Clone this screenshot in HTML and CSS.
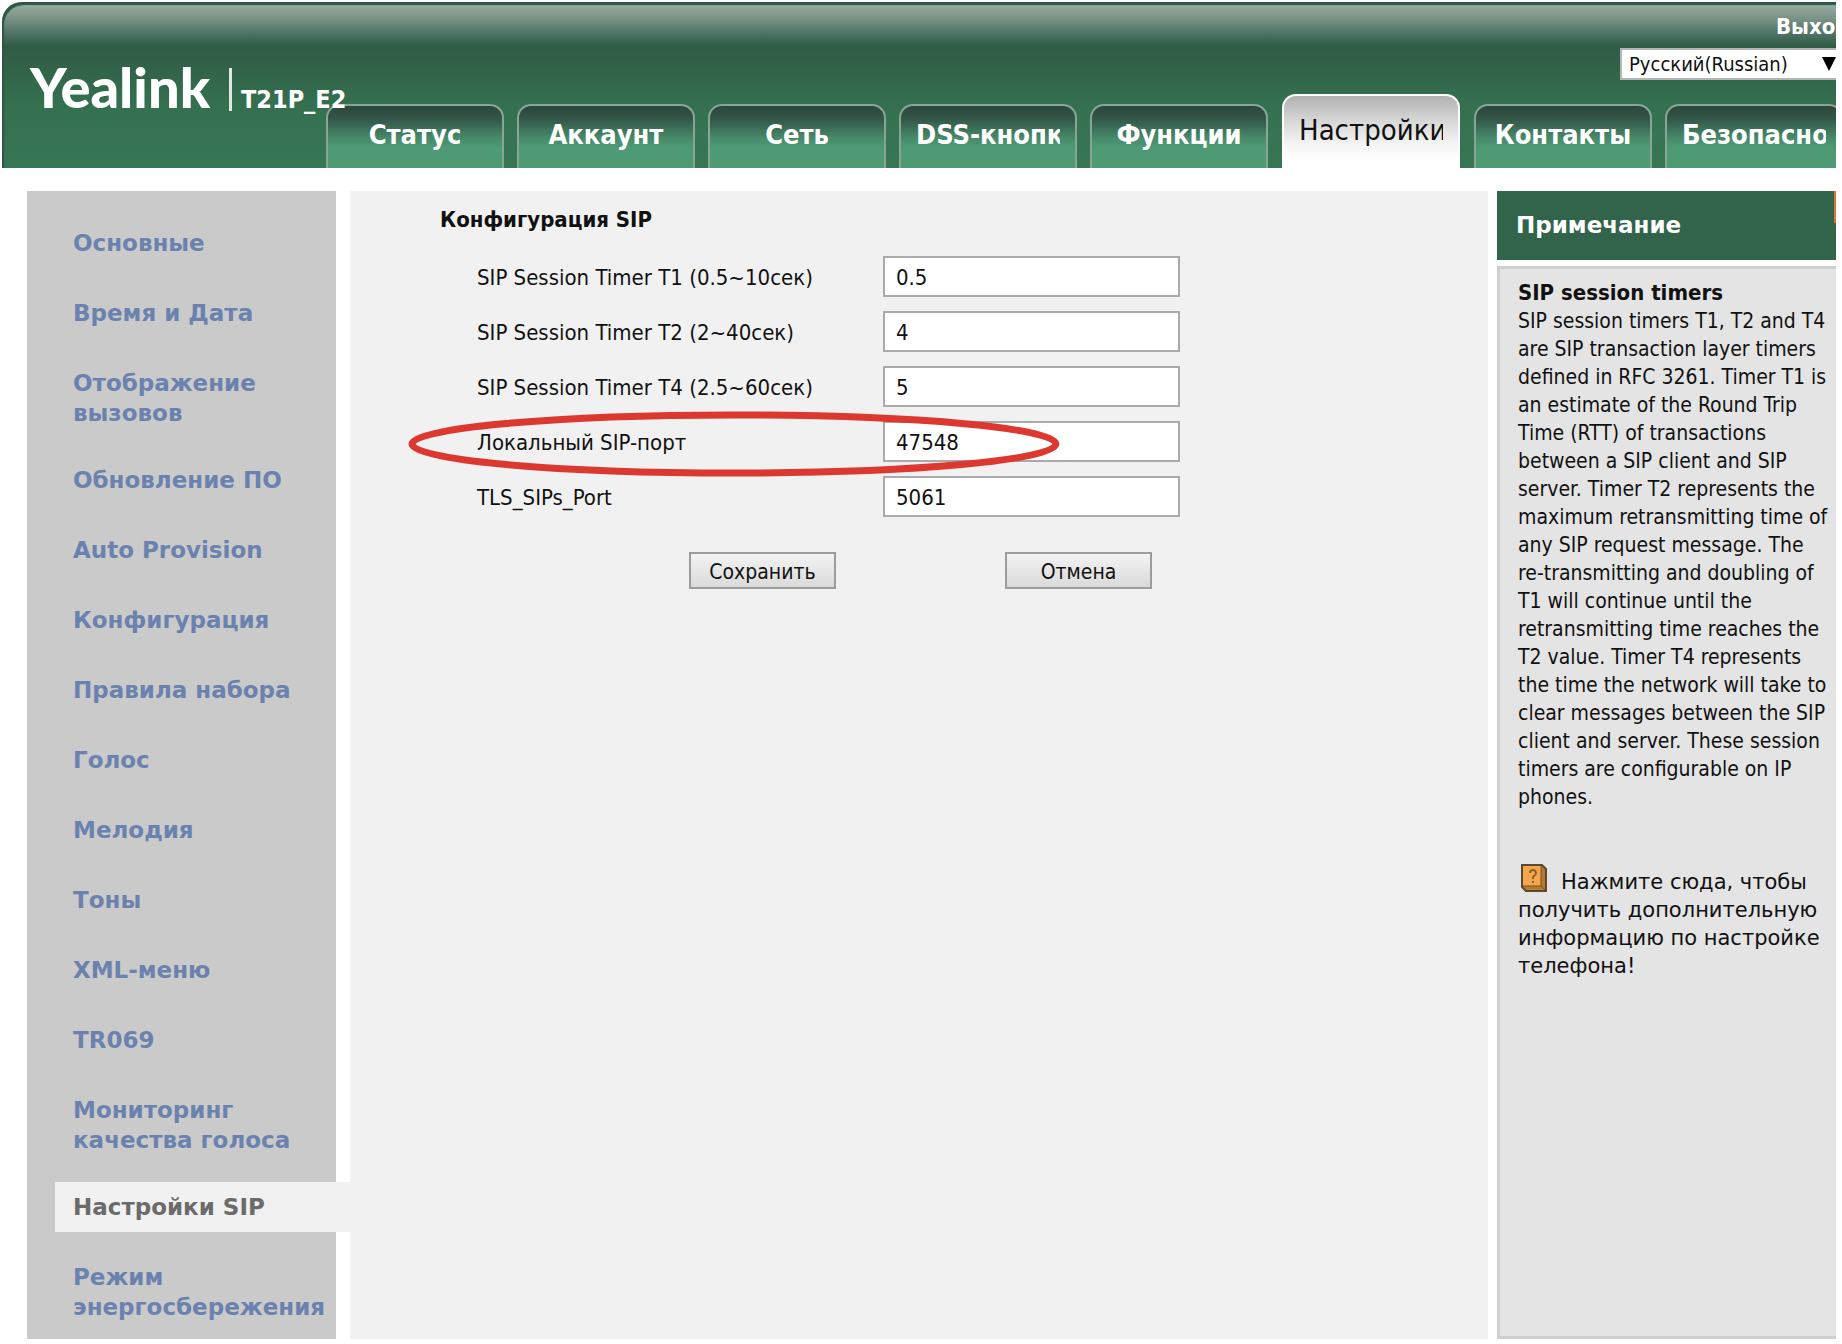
FILE: index.html
```html
<!DOCTYPE html>
<html lang="ru">
<head>
<meta charset="utf-8">
<meta name="viewport" content="width=device-width, initial-scale=1">
<title>Yealink T21P_E2</title>
<link rel="stylesheet" href="styles.css">
</head>
<body>
<div class="page">
  <header class="header">
    <div class="brand">
      <span class="logo">Yealink</span>
      <span class="model">T21P_E2</span>
    </div>
    <div class="tools">
      <a class="logout" href="#">Выход</a>
      <div class="lang">
        <select class="lang-select" aria-label="Язык"><option>Русский(Russian)</option></select>
        <svg class="lang-arrow" viewBox="0 0 14 14" aria-hidden="true"><path d="M0 0h14L7 14z"/></svg>
      </div>
    </div>
    <nav class="tabs">
      <a class="tab" href="#"><span class="tab-text">Статус</span></a>
      <a class="tab" href="#"><span class="tab-text">Аккаунт</span></a>
      <a class="tab" href="#"><span class="tab-text">Сеть</span></a>
      <a class="tab" href="#"><span class="tab-text">DSS-кнопки</span></a>
      <a class="tab" href="#"><span class="tab-text">Функции</span></a>
      <a class="tab tab-active" href="#"><span class="tab-text">Настройки</span></a>
      <a class="tab" href="#"><span class="tab-text">Контакты</span></a>
      <a class="tab" href="#"><span class="tab-text">Безопасность</span></a>
    </nav>
  </header>
  <div class="columns">
    <nav class="sidebar">
      <ul class="menu">
        <li><a class="menu-link" href="#">Основные</a></li>
        <li><a class="menu-link" href="#">Время и Дата</a></li>
        <li class="tall"><a class="menu-link" href="#">Отображение<br>вызовов</a></li>
        <li><a class="menu-link" href="#">Обновление ПО</a></li>
        <li><a class="menu-link" href="#">Auto Provision</a></li>
        <li><a class="menu-link" href="#">Конфигурация</a></li>
        <li><a class="menu-link" href="#">Правила набора</a></li>
        <li><a class="menu-link" href="#">Голос</a></li>
        <li><a class="menu-link" href="#">Мелодия</a></li>
        <li><a class="menu-link" href="#">Тоны</a></li>
        <li><a class="menu-link" href="#">XML-меню</a></li>
        <li><a class="menu-link" href="#">TR069</a></li>
        <li class="tall"><a class="menu-link" href="#">Мониторинг<br>качества голоса</a></li>
        <li><a class="menu-link menu-active" href="#">Настройки SIP</a></li>
        <li class="tall"><a class="menu-link" href="#">Режим<br>энергосбережения</a></li>
      </ul>
    </nav>
    <main class="content">
      <h2 class="section-title">Конфигурация SIP</h2>
      <form class="form">
        <div class="row"><label class="label" for="t1">SIP Session Timer T1 (0.5~10сек)</label><input class="field" id="t1" type="text" value="0.5"></div>
        <div class="row"><label class="label" for="t2">SIP Session Timer T2 (2~40сек)</label><input class="field" id="t2" type="text" value="4"></div>
        <div class="row"><label class="label" for="t4">SIP Session Timer T4 (2.5~60сек)</label><input class="field" id="t4" type="text" value="5"></div>
        <div class="row">
          <label class="label" for="port">Локальный SIP-порт</label><input class="field" id="port" type="text" value="47548">
          <svg class="marker" viewBox="0 0 652 66" aria-hidden="true"><ellipse cx="326" cy="33" rx="322" ry="29"/></svg>
        </div>
        <div class="row"><label class="label" for="tls">TLS_SIPs_Port</label><input class="field" id="tls" type="text" value="5061"></div>
        <div class="actions">
          <button class="button" type="button">Сохранить</button>
          <button class="button" type="button">Отмена</button>
        </div>
      </form>
    </main>
    <aside class="note">
      <div class="note-head"><h2 class="note-title">Примечание</h2><span class="note-mark"></span></div>
      <div class="note-body">
        <h3 class="help-title">SIP session timers</h3>
        <p class="help">SIP session timers T1, T2 and T4<br>are SIP transaction layer timers<br>defined in RFC 3261. Timer T1 is<br>an estimate of the Round Trip<br>Time (RTT) of transactions<br>between a SIP client and SIP<br>server. Timer T2 represents the<br>maximum retransmitting time of<br>any SIP request message. The<br>re-transmitting and doubling of<br>T1 will continue until the<br>retransmitting time reaches the<br>T2 value. Timer T4 represents<br>the time the network will take to<br>clear messages between the SIP<br>client and server. These session<br>timers are configurable on IP<br>phones.</p>
        <a class="more" href="#"><svg class="book" viewBox="0 0 26 28" aria-hidden="true"><path d="M1 1h20l4 4v22H5l-4-4z" fill="#b87930" stroke="#5c4a30" stroke-width="2"/><path d="M2 2h18v20H2z" fill="#f3a64b"/><path d="M20 2v20H2M20 22l4 4" fill="none" stroke="#74502a" stroke-width="1"/><path d="M9 9q0-3 3-3t3 3q0 2-3 4v2M12 17v2" fill="none" stroke="#94602a" stroke-width="2"/></svg>Нажмите сюда, чтобы<br>получить дополнительную<br>информацию по настройке<br>телефона!</a>
      </div>
    </aside>
  </div>
</div>
</body>
</html>
```
FILE: styles.css
```css
* { box-sizing: border-box; }

body {
  margin: 0;
  background: #fff;
  color: #111;
  font: 22px/28px "DejaVu Sans Condensed", "DejaVu Sans", sans-serif;
}

h2, h3, p, ul { margin: 0; padding: 0; }
a { color: inherit; text-decoration: none; }

.page {
  margin: 2px 6px 0 2px;
  padding-bottom: 5px;
  overflow: hidden;
}

.header {
  display: grid;
  grid-template-columns: 324px minmax(0, 1fr);
  grid-template-rows: 92px 74px;
  border-radius: 20px 0 0 0;
  color: #fff;
  font-weight: bold;
  background: linear-gradient(#95a99e 4px, #7b9486 16px, #53766a 30px, #305c45 44px, #32644a 70px, #34704f 100px, #377756 166px);
  box-shadow: inset 2px 3px 1px #2d5744;
}

.brand {
  grid-row: 1 / 3;
  display: flex;
  align-items: baseline;
  padding: 50px 0 0 28px;
  white-space: nowrap;
  position: relative;
  z-index: 1;
}
.logo {
  flex: 0 0 199px;
  font: 900 56px/70px Lato, sans-serif;
}
.model {
  position: relative;
  padding-left: 12px;
  font-size: 25px;
}
.model::before {
  content: "";
  position: absolute;
  left: 0;
  bottom: 3px;
  width: 3px;
  height: 43px;
  background: #dfe8e2;
}

.tools {
  justify-self: end;
  width: 216px;
  padding-top: 11px;
}
.logout {
  display: block;
  margin: 0 0 7px 156px;
}
.lang {
  position: relative;
  width: 224px;
}
.lang-select {
  display: block;
  appearance: none;
  width: 100%;
  height: 32px;
  padding: 0 7px;
  border: 2px solid #b5b5b5;
  border-radius: 0;
  background: #fff;
  color: #111;
  font: 20px/28px "DejaVu Sans Condensed", "DejaVu Sans", sans-serif;
}
.lang-arrow {
  position: absolute;
  right: 8px;
  top: 9px;
  width: 14px;
  height: 14px;
}

.tabs {
  display: flex;
  align-items: flex-end;
  gap: 13px;
}
.tab {
  flex: 0 0 178px;
  min-width: 0;
  height: 64px;
  padding: 11px 15px 0;
  border: 2px solid #89a598;
  border-bottom: 0;
  border-radius: 14px 14px 0 0;
  background: linear-gradient(#2d493b 2px, #34594a 14px, #478a6a 32px, #4d9a74 42px);
  font-size: 27px;
  line-height: 36px;
}
.tab-active {
  height: 74px;
  margin: 0 1px;
  border-color: #fff;
  background: linear-gradient(#b2b2b2, #d6d6d6 24px, #f4f4f4 48px, #fff 64px);
  color: #111;
  font-size: 29px;
  font-weight: normal;
  padding: 16px 15px 0;
}
.tab-text {
  display: block;
  overflow: hidden;
  text-align: center;
  white-space: nowrap;
}

.columns {
  display: flex;
  margin-top: 23px;
  padding-left: 25px;
}

.sidebar {
  flex: 0 0 309px;
  margin-right: 14px;
  padding: 17px 0 0 28px;
  background: #cacaca;
}
.menu { list-style: none; }
.menu li { padding: 10px 0; }
.menu .tall { padding-bottom: 7px; }
.menu-link {
  display: block;
  margin-right: -14px;
  padding: 10px 0 10px 18px;
  color: #6b82ae;
  font: bold 23px/30px "DejaVu Sans", sans-serif;
}
.menu-active {
  background: #f1f1f1;
  color: #6b6b6b;
}

.content {
  flex: 1 1 0;
  min-width: 0;
  margin-right: 9px;
  padding: 14px 0 0 90px;
  background: #f1f1f1;
}
.section-title {
  font-size: 22px;
  line-height: 30px;
}
.form {
  display: flex;
  flex-direction: column;
  gap: 14px;
  padding: 21px 0 0 37px;
}
.row {
  display: flex;
  align-items: center;
  position: relative;
}
.label {
  flex: 0 0 406px;
  padding-top: 3px;
}
.field {
  width: 297px;
  height: 41px;
  padding: 2px 11px 0;
  border: 2px solid #aaa;
  background: #fff;
  color: #111;
  font: inherit;
}
.marker {
  position: absolute;
  left: -69px;
  top: -10px;
  width: 652px;
  height: 66px;
  fill: none;
  stroke: #dc3830;
  stroke-width: 7px;
  pointer-events: none;
}
.actions {
  display: flex;
  gap: 169px;
  padding: 21px 0 0 212px;
}
.button {
  width: 147px;
  height: 37px;
  padding: 2px 0 0;
  border: 2px solid #9c9c9c;
  border-radius: 0;
  background: linear-gradient(#f3f3f3, #dadada);
  color: #111;
  font: 21px/28px "DejaVu Sans Condensed", "DejaVu Sans", sans-serif;
}

.note {
  flex: 0 0 339px;
  display: flex;
  flex-direction: column;
  gap: 6px;
  white-space: nowrap;
}
.note-head {
  display: flex;
  justify-content: space-between;
  height: 69px;
  padding-left: 19px;
  background: #31644a;
  color: #fff;
}
.note-title { font: bold 23px/69px "DejaVu Sans", sans-serif; }
.note-mark {
  width: 2px;
  height: 32px;
  background: #e2702c;
}
.note-body {
  flex: 1;
  padding: 10px 0 0 18px;
  border: 3px solid #cfcfcf;
  border-right: 0;
  background: #e4e4e4;
}
.help-title { font-size: 22px; }
.help { font-size: 21px; }
.more {
  display: block;
  margin-top: 53px;
  font: 21px/28px "DejaVu Sans", sans-serif;
}
.book {
  width: 26px;
  height: 28px;
  margin: 0 14px -3px 3px;
}
```
